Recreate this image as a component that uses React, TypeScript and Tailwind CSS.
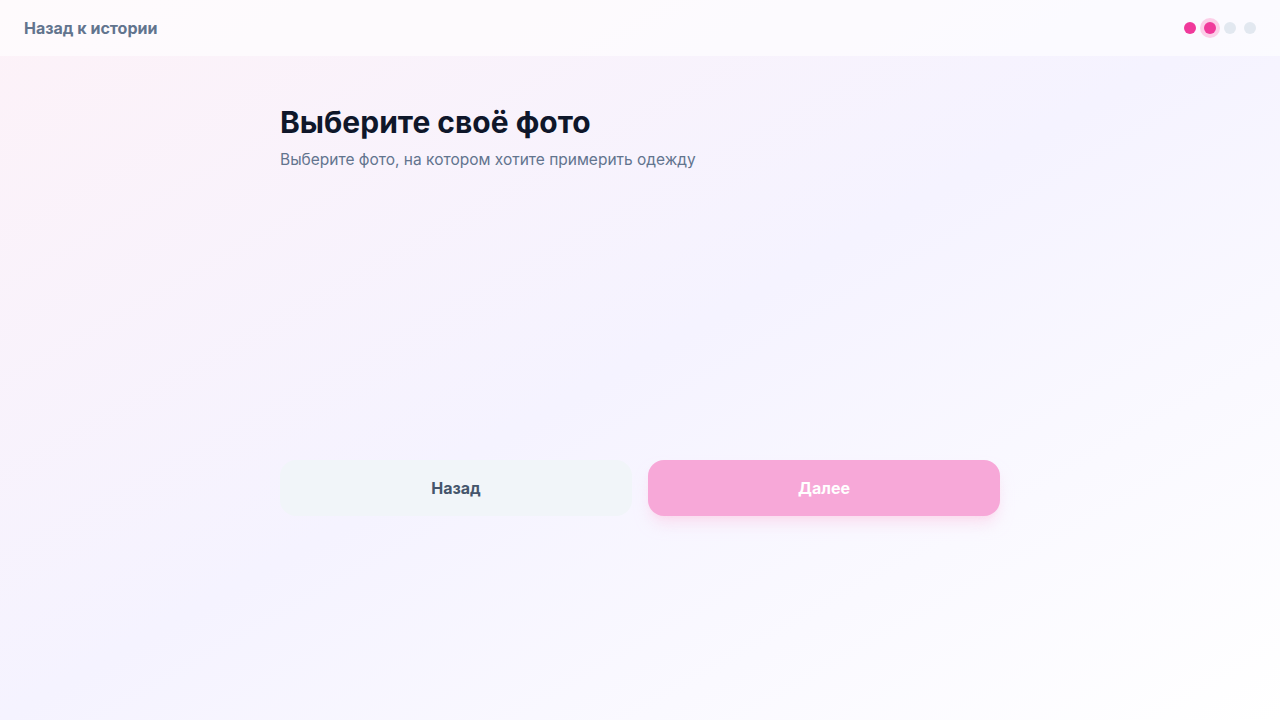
import React from "react";

const steps = [0, 1, 2, 3];

export default function App() {
  const current = 1;

  return (
    <div
      className="min-h-screen w-full bg-gradient-to-br from-[#fdf2f8] via-[#f5f3ff] to-white text-slate-900"
      style={{ fontFamily: "Inter, 'Noto Sans', sans-serif" }}
    >
      <header className="h-14 px-6 flex items-center justify-between bg-white/60">
        <button type="button" className="text-base font-bold text-slate-500">
          Назад к истории
        </button>
        <div className="flex items-center gap-2">
          {steps.map((i) => (
            <span
              key={i}
              className={`w-3 h-3 rounded-full ${
                i <= current ? "bg-[#f0399b]" : "bg-slate-200"
              } ${i === current ? "ring-4 ring-pink-200" : ""}`}
            />
          ))}
        </div>
      </header>

      <main className="mx-auto w-[720px] pt-12">
        <h1 className="text-3xl font-bold text-[#0f172a]">
          Выберите своё фото
        </h1>
        <p className="mt-2 text-[15.5px] leading-6 text-slate-500">
          Выберите фото, на котором хотите примерить одежду
        </p>

        <div className="h-[288px]" />

        <div className="grid grid-cols-2 gap-4">
          <button
            type="button"
            className="h-14 rounded-2xl bg-slate-100 text-base font-bold text-slate-600"
          >
            Назад
          </button>
          <button
            type="button"
            className="h-14 rounded-2xl bg-[#f7a8d8] text-base font-bold text-white shadow-lg shadow-pink-200/60"
          >
            Далее
          </button>
        </div>
      </main>
    </div>
  );
}
